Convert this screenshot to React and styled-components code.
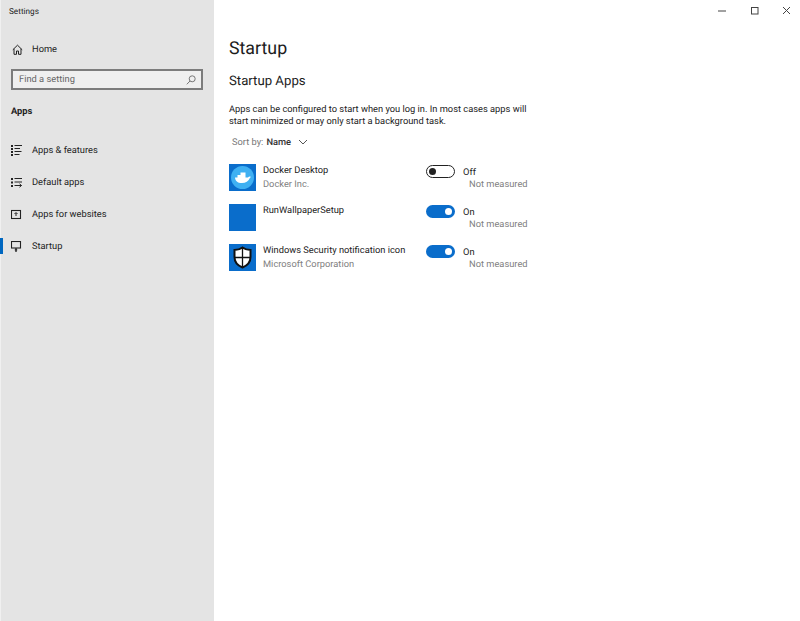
import React from 'react';
import styled, { createGlobalStyle } from 'styled-components';

const GlobalStyle = createGlobalStyle`
  html, body { margin: 0; padding: 0; height: 100%; background: #fff; }
  body {
    font-family: Roboto, 'Open Sans', sans-serif;
    color: #1a1a1a;
    text-rendering: geometricPrecision;
  }
  * { box-sizing: border-box; }
`;

const Page = styled.div`
  display: flex;
  width: 800px;
  height: 621px;
  overflow: hidden;
`;

const Sidebar = styled.aside`
  width: 214px;
  flex: none;
  background: #e4e4e4;
  border-left: 1px solid #f0f0f0;
  display: flex;
  flex-direction: column;
`;

const WindowTitle = styled.div`
  font-size: 8.2px;
  line-height: 12px;
  padding: 6px 0 0 8px;
  height: 33px;
  color: #222;
`;

const HomeRow = styled.div`
  display: flex;
  align-items: center;
  height: 32px;
  padding-left: 11px;
  gap: 9px;
  font-size: 9.3px;
  color: #222;
`;

const SearchBox = styled.div`
  display: flex;
  align-items: center;
  justify-content: space-between;
  width: 192px;
  height: 21px;
  margin: 4px 0 0 10px;
  padding: 0 5px 0 6px;
  background: #efefef;
  border: 2px solid #7c7c7c;
  font-size: 9.3px;
  color: #666;
`;

const SectionLabel = styled.div`
  font-size: 9.3px;
  font-weight: 700;
  line-height: 14px;
  margin: 15px 0 15px 10px;
  color: #222;
`;

const NavList = styled.nav`
  display: flex;
  flex-direction: column;
`;

const NavItem = styled.div`
  position: relative;
  display: flex;
  align-items: center;
  gap: 10px;
  height: 32px;
  padding-left: 10px;
  font-size: 9.3px;
  color: #222;

  ${p => p.$active && `
    &::before {
      content: '';
      position: absolute;
      left: -1px;
      top: 8px;
      width: 3px;
      height: 16px;
      background: #0067c0;
    }
  `}
`;

const Main = styled.main`
  flex: 1;
  display: flex;
  flex-direction: column;
  background: #fff;
`;

const TitleBar = styled.div`
  display: flex;
  justify-content: flex-end;
  height: 21px;
  margin-right: -3px;
`;

const WinButton = styled.div`
  width: 32px;
  height: 21px;
  display: flex;
  align-items: center;
  justify-content: center;
`;

const Content = styled.div`
  padding: 16px 0 0 15px;
  display: flex;
  flex-direction: column;
`;

const PageTitle = styled.h1`
  margin: 0;
  font-size: 17.8px;
  font-weight: 400;
  line-height: 24px;
  color: #1c1c1c;
`;

const SectionTitle = styled.h2`
  margin: 12px 0 0;
  font-size: 13.2px;
  font-weight: 400;
  line-height: 18px;
  color: #1c1c1c;
`;

const Description = styled.p`
  margin: 13px 0 0;
  width: 310px;
  font-size: 9.3px;
  line-height: 12px;
  color: #222;
`;

const SortRow = styled.div`
  display: flex;
  align-items: center;
  gap: 3px;
  margin: 7px 0 0 3px;
  height: 14px;
  font-size: 9.3px;
  color: #777;
`;

const SortValue = styled.span`
  color: #333;
  font-weight: 500;
  margin-right: 4px;
`;

const AppList = styled.div`
  display: flex;
  flex-direction: column;
  margin-top: 15px;
`;

const AppRow = styled.div`
  display: flex;
  align-items: flex-start;
  height: 40px;
`;

const AppIcon = styled.div`
  width: 27px;
  height: 27px;
  flex: none;
  background: #0a6dcb;
  display: flex;
  align-items: center;
  justify-content: center;
`;

const AppInfo = styled.div`
  width: 170px;
  padding-left: 7px;
  flex: none;
`;

const AppName = styled.div`
  font-size: 9.3px;
  line-height: 14px;
  color: #222;
`;

const Publisher = styled.div`
  font-size: 9.3px;
  line-height: 14px;
  color: #808080;
`;

const ToggleColumn = styled.div`
  width: 102px;
  flex: none;
  display: flex;
  flex-direction: column;
`;

const ToggleRow = styled.div`
  display: flex;
  align-items: center;
  gap: 8px;
  height: 15px;
  font-size: 9.3px;
  color: #222;
`;

const ToggleLabel = styled.span`
  padding-top: 2px;
`;

const Toggle = styled.div`
  width: 29px;
  height: 13px;
  border-radius: 7px;
  display: flex;
  align-items: center;
  padding: 0 3px 0 2px;
  justify-content: ${p => (p.$on ? 'flex-end' : 'flex-start')};
  background: ${p => (p.$on ? '#0a6dcb' : '#fff')};
  border: ${p => (p.$on ? 'none' : '1.5px solid #222')};

  &::after {
    content: '';
    width: 7px;
    height: 7px;
    border-radius: 50%;
    background: ${p => (p.$on ? '#fff' : '#222')};
  }
`;

const Measure = styled.div`
  margin-top: -1px;
  padding-left: 43px;
  font-size: 9.3px;
  line-height: 13px;
  white-space: nowrap;
  color: #808080;
`;

const Line = ({ w = 14, h = 14, children }) => (
  <svg width={w} height={h} viewBox={`0 0 ${w} ${h}`} fill="none" stroke="#222" strokeWidth="1">
    {children}
  </svg>
);

const apps = [
  { name: 'Docker Desktop', publisher: 'Docker Inc.', on: false, icon: 'docker' },
  { name: 'RunWallpaperSetup', publisher: '', on: true, icon: null },
  { name: 'Windows Security notification icon', publisher: 'Microsoft Corporation', on: true, icon: 'shield' },
];

const DockerLogo = () => (
  <svg width="25" height="25" viewBox="0 0 25 25">
    <circle cx="12.500" cy="12.500" r="11.500" fill="#3fb0f2" />
    <path d="M5 12.500h13c.6-1 1.500-1.300 2.500-1 .2.600 0 1.200-.8 1.800-1.200 3.200-4 4.700-7.700 4.700-4.500 0-6.800-2-7-5.500z" fill="#fff" />
    <path d="M7.500 10h8v3h-8zM10.500 7.500h5v3h-5z" fill="#fff" />
  </svg>
);

const ShieldLogo = () => (
  <svg width="19" height="23" viewBox="0 0 19 23">
    <path d="M9.500 1.500C7.500 3 4.500 4 1.500 4v7c0 5 3 8.500 8 10.500 5-2 8-5.500 8-10.500V4c-3 0-6-1-8-2.500z" fill="#fff" stroke="#111" strokeWidth="2" />
    <path d="M9.500 2v19M2 11.500h15" stroke="#111" strokeWidth="1.300" fill="none" />
  </svg>
);

export default function App() {
  return (
    <>
      <GlobalStyle />
      <Page>
        <Sidebar>
          <WindowTitle>Settings</WindowTitle>
          <HomeRow>
            <Line w={11} h={11}>
              <path d="M.8 5.800 5.500 1.200l4.700 4.600M2 4.800v5.500h2.500V7h2v3.300H9V4.800" />
            </Line>
            Home
          </HomeRow>
          <SearchBox>
            Find a setting
            <Line w={10} h={10}>
              <circle cx="6.200" cy="3.800" r="3" stroke="#777" />
              <path d="M4 6 .8 9.300" stroke="#777" />
            </Line>
          </SearchBox>
          <SectionLabel>Apps</SectionLabel>
          <NavList>
            <NavItem>
              <Line w={11} h={11}>
                <path d="M0 1h2M0 4h2M0 7h2M0 10h2" strokeWidth="2" />
                <path d="M3.500 .5h7.500M3.500 3.500h5.500M3.500 6.500h7M3.500 9.500h5" />
              </Line>
              Apps &amp; features
            </NavItem>
            <NavItem>
              <Line w={11} h={11}>
                <path d="M0 2h2M0 5.500h2M0 9h2" strokeWidth="2" />
                <path d="M3.500 1.500h7.500M3.500 5h7.500M3.500 8.500h7M8.500 6.800l2 1.700-2 1.700" />
              </Line>
              Default apps
            </NavItem>
            <NavItem>
              <Line w={11} h={11}>
                <rect x=".5" y="1.500" width="9" height="8" strokeWidth="1.100" />
                <path d="M3.500 5l1.500-1.500L6.500 5M5 4v3" />
              </Line>
              Apps for websites
            </NavItem>
            <NavItem $active>
              <Line w={11} h={11}>
                <rect x=".5" y=".5" width="9" height="6.500" strokeWidth="1.100" />
                <path d="M5 7v4M3.800 8.800h2.400" strokeWidth="1.300" />
              </Line>
              Startup
            </NavItem>
          </NavList>
        </Sidebar>
        <Main>
          <TitleBar>
            <WinButton>
              <svg width="10" height="10" viewBox="0 0 10 10"><path d="M0 5h8" stroke="#444" /></svg>
            </WinButton>
            <WinButton>
              <svg width="10" height="10" viewBox="0 0 10 10"><rect x="1.500" y="1.500" width="6.500" height="6.500" fill="none" stroke="#444" /></svg>
            </WinButton>
            <WinButton>
              <svg width="10" height="10" viewBox="0 0 10 10"><path d="M1 1l7 7M8 1L1 8" stroke="#444" /></svg>
            </WinButton>
          </TitleBar>
          <Content>
            <PageTitle>Startup</PageTitle>
            <SectionTitle>Startup Apps</SectionTitle>
            <Description>
              Apps can be configured to start when you log in. In most cases apps will start minimized or may only start a background task.
            </Description>
            <SortRow>
              Sort by: <SortValue>Name</SortValue>
              <svg width="10" height="7" viewBox="0 0 10 7"><path d="M1 1l4 4 4-4" fill="none" stroke="#555" /></svg>
            </SortRow>
            <AppList>
              {apps.map(app => (
                <AppRow key={app.name}>
                  <AppIcon>
                    {app.icon === 'docker' && <DockerLogo />}
                    {app.icon === 'shield' && <ShieldLogo />}
                  </AppIcon>
                  <AppInfo>
                    <AppName>{app.name}</AppName>
                    <Publisher>{app.publisher}</Publisher>
                  </AppInfo>
                  <ToggleColumn>
                    <ToggleRow>
                      <Toggle $on={app.on} />
                      <ToggleLabel>{app.on ? 'On' : 'Off'}</ToggleLabel>
                    </ToggleRow>
                    <Measure>Not measured</Measure>
                  </ToggleColumn>
                </AppRow>
              ))}
            </AppList>
          </Content>
        </Main>
      </Page>
    </>
  );
}
